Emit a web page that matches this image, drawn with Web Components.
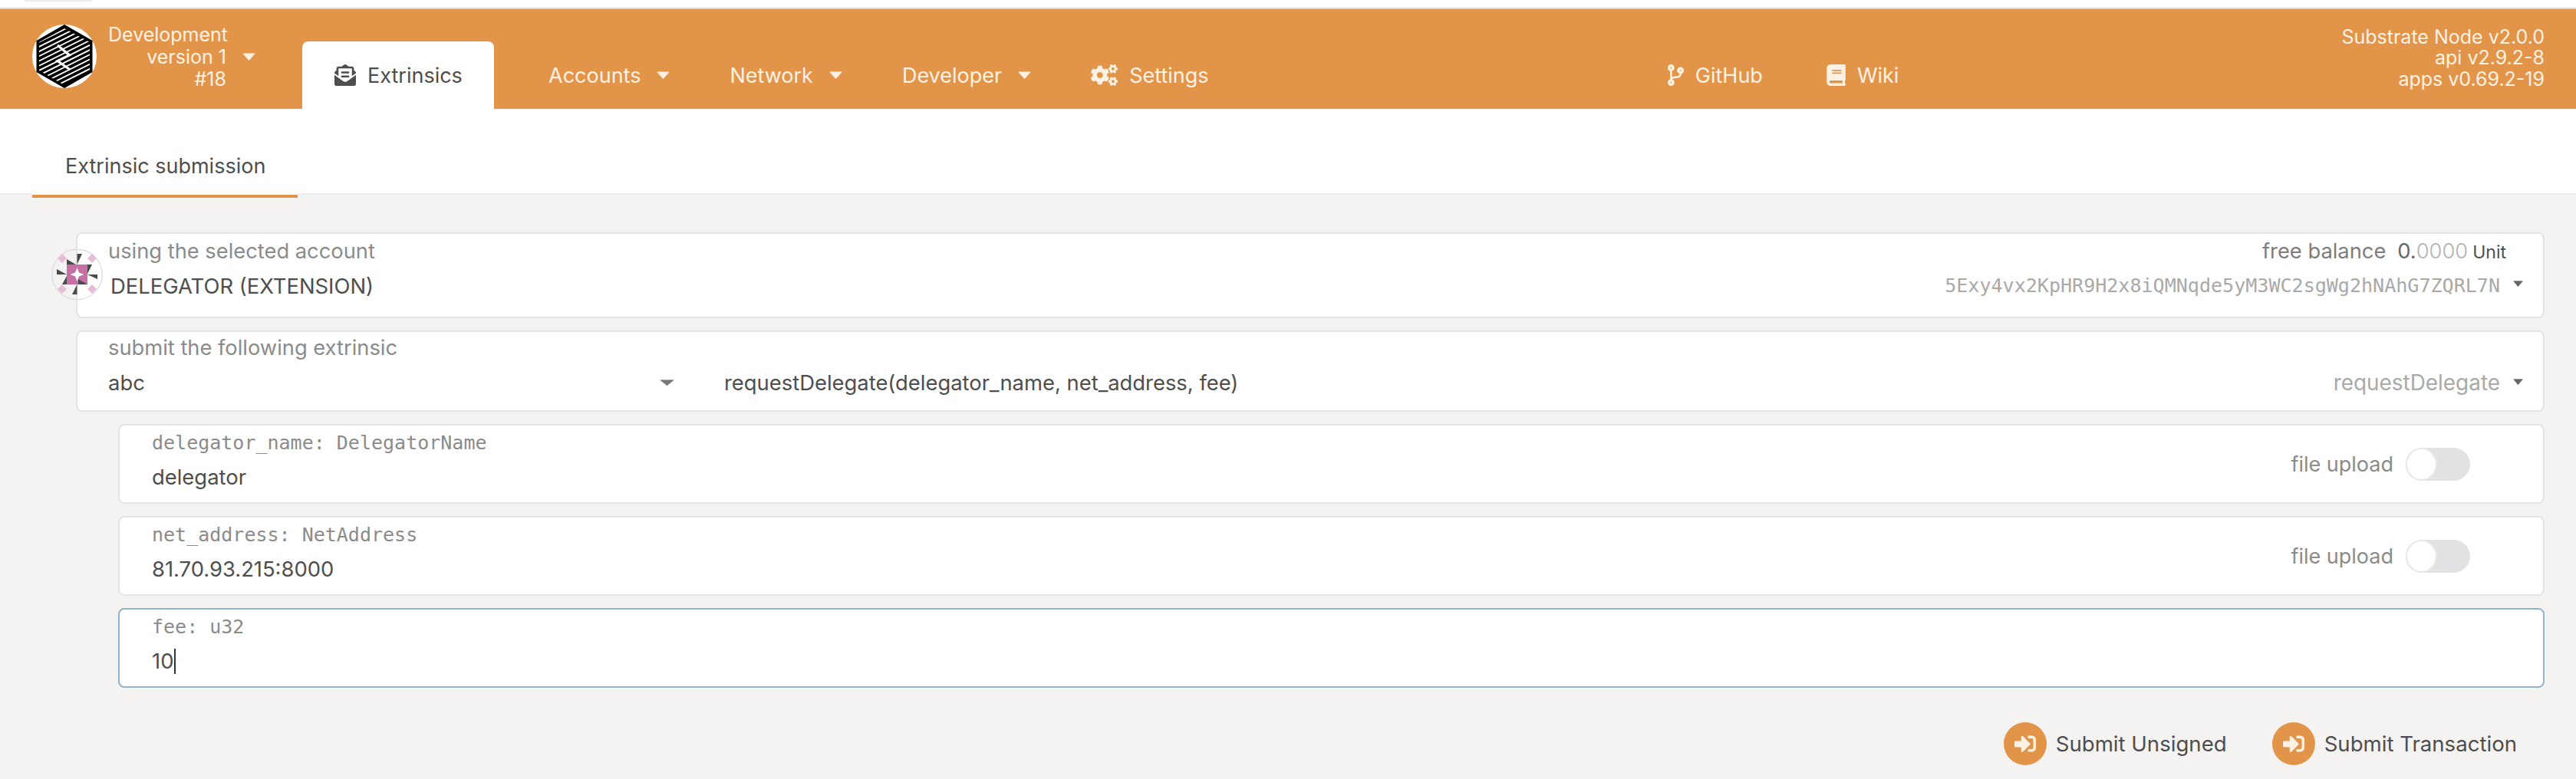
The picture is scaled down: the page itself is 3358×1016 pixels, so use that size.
<!DOCTYPE html>
<html>
<head>
<meta charset="utf-8">
<title>Extrinsics</title>
<style>
  html, body { margin: 0; height: 100%; background: #f4f3f1; }
  body { font-family: Inter, "Liberation Sans", sans-serif; color: #4e4e4e; }
  .mono { font-family: "DejaVu Sans Mono", "Liberation Mono", monospace; font-size: 25px; }
</style>
</head>
<body>
<app-header>
  <nav-brand></nav-brand>
  <nav-tab active icon="extrinsics">Extrinsics</nav-tab>
  <nav-tab caret>Accounts</nav-tab>
  <nav-tab caret>Network</nav-tab>
  <nav-tab caret>Developer</nav-tab>
  <nav-tab icon="settings">Settings</nav-tab>
  <nav-tab slot="links" icon="github">GitHub</nav-tab>
  <nav-tab slot="links" icon="wiki" style="margin-left:5px">Wiki</nav-tab>
  <span slot="versions">Substrate Node v2.0.0</span>
  <span slot="versions">api v2.9.2-8</span>
  <span slot="versions">apps v0.69.2-19</span>
</app-header>

<sub-tabs>Extrinsic submission</sub-tabs>

<main-form>
  <form-card kind="account">
    <account-icon slot="overlay"></account-icon>
    <span slot="label">using the selected account</span>
    <balance-info slot="label-end"></balance-info>
    <span style="margin-left:3px">DELEGATOR (EXTENSION)</span>
    <select-end slot="value-end" mono>5Exy4vx2KpHR9H2x8iQMNqde5yM3WC2sgWg2hNAhG7ZQRL7N</select-end>
  </form-card>

  <form-card kind="call">
    <span slot="label">submit the following extrinsic</span>
    <module-pick>abc</module-pick>
    <span>requestDelegate(delegator_name, net_address, fee)</span>
    <select-end slot="value-end">requestDelegate</select-end>
  </form-card>

  <form-card kind="arg">
    <span slot="label" class="mono">delegator_name: DelegatorName</span>
    <span>delegator</span>
    <file-toggle slot="side"></file-toggle>
  </form-card>

  <form-card kind="arg">
    <span slot="label" class="mono">net_address: NetAddress</span>
    <span>81.70.93.215:8000</span>
    <file-toggle slot="side"></file-toggle>
  </form-card>

  <form-card kind="arg" focused>
    <span slot="label" class="mono">fee: u32</span>
    <text-cursor>10</text-cursor>
  </form-card>

  <submit-row>
    <submit-button>Submit Unsigned</submit-button>
    <submit-button>Submit Transaction</submit-button>
  </submit-row>
</main-form>

<script>
const ICONS = {
  extrinsics: ["0 0 512 512", "M176 216h160c8.84 0 16-7.16 16-16v-16c0-8.84-7.16-16-16-16H176c-8.84 0-16 7.16-16 16v16c0 8.84 7.16 16 16 16zm-16 80c0 8.84 7.16 16 16 16h160c8.84 0 16-7.16 16-16v-16c0-8.84-7.16-16-16-16H176c-8.84 0-16 7.16-16 16v16zm96 121.13c-16.42 0-32.84-5.06-46.86-15.19L0 250.86V464c0 26.51 21.49 48 48 48h416c26.51 0 48-21.49 48-48V250.86L302.86 401.94c-14.02 10.12-30.44 15.19-46.86 15.19zm237.61-254.18c-8.85-6.94-17.24-13.47-29.61-22.81V96c0-26.51-21.49-48-48-48h-77.55c-3.04-2.2-5.87-4.26-9.04-6.56C312.6 29.17 279.2-.35 256 0c-23.2-.35-56.59 29.17-73.41 41.44-3.17 2.3-6 4.36-9.04 6.56H96c-26.51 0-48 21.49-48 48v44.14c-12.37 9.33-20.76 15.87-29.61 22.81A47.995 47.995 0 0 0 0 200.72v10.65l96 69.35V96h320v184.72l96-69.35v-10.65c0-14.74-6.78-28.67-18.39-37.77z", 28, 28],
  settings: ["0 0 640 512", "M512.1 191l-8.2 14.3c-3 5.3-9.4 7.5-15.1 5.4-11.8-4.4-22.6-10.7-32.1-18.6-4.6-3.8-5.8-10.5-2.8-15.7l8.2-14.3c-6.9-8-12.3-17.3-15.9-27.4h-16.5c-6 0-11.2-4.3-12.2-10.3-2-12-2.1-24.6 0-37.1 1-6 6.2-10.4 12.2-10.4h16.5c3.6-10.1 9-19.4 15.9-27.4l-8.2-14.3c-3-5.2-1.9-11.9 2.8-15.7 9.5-7.9 20.4-14.2 32.1-18.6 5.7-2.1 12.1.1 15.1 5.4l8.2 14.3c10.5-1.9 21.2-1.9 31.7 0L552 6.3c3-5.3 9.4-7.5 15.1-5.4 11.8 4.4 22.6 10.7 32.1 18.6 4.6 3.8 5.8 10.5 2.8 15.7l-8.2 14.3c6.9 8 12.3 17.3 15.9 27.4h16.5c6 0 11.2 4.3 12.2 10.3 2 12 2.1 24.6 0 37.1-1 6-6.2 10.4-12.2 10.4h-16.5c-3.6 10.1-9 19.4-15.9 27.4l8.2 14.3c3 5.2 1.9 11.9-2.8 15.7-9.5 7.9-20.4 14.2-32.1 18.6-5.7 2.1-12.1-.1-15.1-5.4l-8.2-14.3c-10.4 1.9-21.2 1.9-31.7 0zm-10.5-58.8c38.5 29.6 82.4-14.3 52.8-52.8-38.5-29.7-82.4 14.3-52.8 52.8zM386.3 286.1l33.7 16.8c10.1 5.8 14.5 18.1 10.5 29.1-8.9 24.2-26.4 46.4-42.6 65.8-7.4 8.9-20.2 11.1-30.3 5.3l-29.1-16.8c-16 13.7-34.6 24.6-54.9 31.7v33.6c0 11.6-8.3 21.6-19.7 23.6-24.6 4.2-50.4 4.4-75.9 0-11.5-2-20-11.9-20-23.6V418c-20.3-7.2-38.9-18-54.9-31.7L74 403c-10 5.8-22.9 3.6-30.3-5.3-16.2-19.4-33.3-41.6-42.2-65.7-4-10.9.4-23.2 10.5-29.1l33.3-16.8c-3.9-20.9-3.9-42.4 0-63.4L12 205.8c-10.1-5.8-14.6-18.1-10.5-29 8.9-24.2 26-46.4 42.2-65.8 7.4-8.9 20.2-11.1 30.3-5.3l29.1 16.8c16-13.7 34.6-24.6 54.9-31.7V57.1c0-11.5 8.2-21.5 19.6-23.5 24.6-4.2 50.5-4.4 76-.1 11.5 2 20 11.9 20 23.6v33.6c20.3 7.2 38.9 18 54.9 31.7l29.1-16.8c10-5.8 22.9-3.6 30.3 5.3 16.2 19.4 33.2 41.6 42.1 65.8 4 10.9.1 23.2-10 29.1l-33.7 16.8c3.9 21 3.9 42.5 0 63.5zm-117.6 21.1c59.2-77-28.7-164.9-105.7-105.7-59.2 77 28.7 164.9 105.7 105.7zm243.4 182.7l-8.2 14.3c-3 5.3-9.4 7.5-15.1 5.4-11.8-4.4-22.6-10.7-32.1-18.6-4.6-3.8-5.8-10.5-2.8-15.7l8.2-14.3c-6.9-8-12.3-17.3-15.9-27.4h-16.5c-6 0-11.2-4.3-12.2-10.3-2-12-2.1-24.6 0-37.1 1-6 6.2-10.4 12.2-10.4h16.5c3.6-10.1 9-19.4 15.9-27.4l-8.2-14.3c-3-5.2-1.9-11.9 2.8-15.7 9.5-7.9 20.4-14.2 32.1-18.6 5.7-2.1 12.1.1 15.1 5.4l8.2 14.3c10.5-1.9 21.2-1.9 31.7 0l8.2-14.3c3-5.3 9.4-7.5 15.1-5.4 11.8 4.4 22.6 10.7 32.1 18.6 4.6 3.8 5.8 10.5 2.8 15.7l-8.2 14.3c6.9 8 12.3 17.3 15.9 27.4h16.5c6 0 11.2 4.3 12.2 10.3 2 12 2.1 24.6 0 37.1-1 6-6.2 10.4-12.2 10.4h-16.5c-3.6 10.1-9 19.4-15.9 27.4l8.2 14.3c3 5.2 1.9 11.9-2.8 15.7-9.5 7.9-20.4 14.2-32.1 18.6-5.7 2.1-12.1-.1-15.1-5.4l-8.2-14.3c-10.4 1.9-21.2 1.9-31.7 0zM501.6 431c38.5 29.6 82.4-14.3 52.8-52.8-38.5-29.6-82.4 14.3-52.8 52.8z", 35, 28],
  github: ["0 0 384 512", "M384 144c0-44.2-35.8-80-80-80s-80 35.8-80 80c0 36.4 24.3 67.1 57.5 76.8-.6 16.1-4.2 28.5-11 36.9-15.4 19.2-49.3 22.4-85.2 25.7-28.2 2.6-57.4 5.4-81.3 16.9v-144c32.5-10.2 56-40.5 56-76.3 0-44.2-35.8-80-80-80S0 35.8 0 80c0 35.8 23.5 66.1 56 76.3v199.3C23.5 365.9 0 396.2 0 432c0 44.2 35.8 80 80 80s80-35.8 80-80c0-34-21.2-63.1-51.2-74.6 3.1-5.2 7.8-9.8 14.9-13.4 16.2-8.2 40.4-10.4 66.1-12.8 42.2-3.9 90-8.4 118.2-43.4 14-17.4 21.1-39.8 21.6-67.9 31.6-10.8 54.4-40.7 54.4-75.9zM80 64c8.8 0 16 7.2 16 16s-7.2 16-16 16-16-7.2-16-16 7.2-16 16-16zm0 384c-8.8 0-16-7.2-16-16s7.2-16 16-16 16 7.2 16 16-7.2 16-16 16zm224-320c8.8 0 16 7.2 16 16s-7.2 16-16 16-16-7.2-16-16 7.2-16 16-16z", 21, 28],
  wiki: ["0 0 448 512", "M448 360V24c0-13.3-10.7-24-24-24H96C43 0 0 43 0 96v320c0 53 43 96 96 96h328c13.3 0 24-10.7 24-24v-16c0-7.5-3.5-14.3-8.9-18.7-4.2-15.4-4.2-59.3 0-74.7 5.4-4.3 8.9-11.1 8.9-18.6zM128 134c0-3.3 2.7-6 6-6h212c3.3 0 6 2.7 6 6v20c0 3.3-2.7 6-6 6H134c-3.3 0-6-2.7-6-6v-20zm0 64c0-3.3 2.7-6 6-6h212c3.3 0 6 2.7 6 6v20c0 3.3-2.7 6-6 6H134c-3.3 0-6-2.7-6-6v-20zm253.4 250H96c-17.7 0-32-14.3-32-32 0-17.6 14.4-32 32-32h285.4c-1.9 17.1-1.9 46.9 0 64z", 25, 28],
  submit: ["0 0 512 512", "M416 448h-84c-6.6 0-12-5.4-12-12v-40c0-6.6 5.4-12 12-12h84c17.7 0 32-14.3 32-32V160c0-17.7-14.3-32-32-32h-84c-6.6 0-12-5.4-12-12V76c0-6.6 5.4-12 12-12h84c53 0 96 43 96 96v192c0 53-43 96-96 96zm-47-201L201 79c-15-15-41-4.5-41 17v96H24c-13.3 0-24 10.7-24 24v96c0 13.3 10.7 24 24 24h136v96c0 21.5 26 32 41 17l168-168c9.3-9.4 9.3-24.6 0-34z", 28, 28],
};

function iconSvg(name) {
  const [box, d, w, h] = ICONS[name];
  return `<svg viewBox="${box}" width="${w}" height="${h}" fill="currentColor" style="flex:none;display:block"><path d="${d}"/></svg>`;
}

function caretSvg(w, h, color) {
  return `<svg viewBox="0 0 18 10" width="${w}" height="${h}" preserveAspectRatio="none" style="flex:none;display:block"><path d="M1 1h16L9 9.5z" fill="${color}" stroke="${color}" stroke-width="1" stroke-linejoin="round"/></svg>`;
}

class AppHeader extends HTMLElement {
  constructor() {
    super();
    this.attachShadow({ mode: "open" });
    this.shadowRoot.innerHTML = `
      <style>
        :host { display: block; background: #fff; }
        .pill { width: 88px; height: 2px; margin-left: 32px; background: #ececec; border-radius: 0 0 8px 8px; }
        .bar {
          display: flex; align-items: flex-end; height: 130px; margin-top: 8px;
          border-top: 2px solid #d9d9d9; background: #e29548; color: #fdf1e4;
          padding-left: 42px; padding-right: 41px;
        }
        .links { display: flex; margin-left: auto; }
        .versions {
          display: flex; flex-direction: column; align-items: flex-end; align-self: center;
          margin-left: 538px; font-size: 25px; line-height: 27.5px; margin-top: -2px;
        }
      </style>
      <div class="pill"></div>
      <div class="bar">
        <slot></slot>
        <div class="links"><slot name="links"></slot></div>
        <div class="versions"><slot name="versions"></slot></div>
      </div>`;
  }
}

class NavBrand extends HTMLElement {
  constructor() {
    super();
    this.attachShadow({ mode: "open" });
    let lines = "";
    for (let y = -10; y < 130; y += 6.2) {
      lines += `<line x1="0" y1="${y}" x2="84" y2="${y - 42}"/>`;
    }
    this.shadowRoot.innerHTML = `
      <style>
        :host { display: flex; align-items: center; align-self: center; flex: none; margin-top: -6px; width: 352px; color: #fdf1e4; }
        svg.logo { display: block; flex: none; }
        .text { margin-left: 15px; width: 154px; text-align: right; font-size: 25px; line-height: 29px; white-space: nowrap; }
        .caret { margin-left: 21px; }
      </style>
      <svg class="logo" width="84" height="84" viewBox="0 0 84 84">
        <defs>
          <clipPath id="hexin"><polygon points="42,5 75,23 75,60 42,79 9,60 9,23"/></clipPath>
        </defs>
        <ellipse cx="42" cy="41.5" rx="42" ry="41.5" fill="#fff"/>
        <polygon points="42,0 78.5,21 78.5,62 42,83 5.5,62 5.5,21" fill="#000"/>
        <g clip-path="url(#hexin)" stroke="#fff" stroke-width="1.9">${lines}</g>
        <polyline points="33,27 48.5,40 33,47.5 49.5,59" fill="none" stroke="#fff" stroke-width="3.2"/>
      </svg>
      <div class="text">Development<br>version 1<br>#18</div>
      <div class="caret">${caretSvg(17, 10, "#fdf1e4")}</div>`;
  }
}

class NavTab extends HTMLElement {
  constructor() {
    super();
    this.attachShadow({ mode: "open" });
    const icon = this.getAttribute("icon");
    this.shadowRoot.innerHTML = `
      <style>
        :host {
          display: flex; align-items: center; flex: none; height: 88px; box-sizing: border-box;
          padding: 0 39px; font-size: 27px; white-space: nowrap;
        }
        :host([active]) {
          background: #fff; color: #4e4e4e; border-radius: 8px 8px 0 0;
          width: 250px; padding: 0 0 0 42px; margin-right: 32px;
        }
        .ic { margin-right: 15px; }
        .car { margin-left: 21px; }
      </style>
      ${icon ? `<span class="ic">${iconSvg(icon)}</span>` : ""}
      <slot></slot>
      ${this.hasAttribute("caret") ? `<span class="car">${caretSvg(17, 10, "#fdf1e4")}</span>` : ""}`;
  }
}

class SubTabs extends HTMLElement {
  constructor() {
    super();
    this.attachShadow({ mode: "open" });
    this.shadowRoot.innerHTML = `
      <style>
        :host { display: block; height: 112px; box-sizing: border-box; background: #fff; border-bottom: 2px solid #ededed; padding-left: 42px; }
        .tab {
          width: 346px; height: 116px; box-sizing: border-box; padding: 60px 0 0 43px;
          background: #fff; border-bottom: 4px solid #e29548; font-size: 27px; line-height: 30px; color: #4e4e4e;
        }
      </style>
      <div class="tab"><slot></slot></div>`;
  }
}

class MainForm extends HTMLElement {
  constructor() {
    super();
    this.attachShadow({ mode: "open" });
    this.shadowRoot.innerHTML = `
      <style>
        :host { display: flex; flex-direction: column; gap: 16px; padding: 49px 41px 0 99px; }
      </style>
      <slot></slot>`;
  }
}

class FormCard extends HTMLElement {
  constructor() {
    super();
    this.attachShadow({ mode: "open" });
    this.shadowRoot.innerHTML = `
      <style>
        :host {
          display: flex; position: relative; box-sizing: border-box; background: #fff;
          border: 2px solid #e4e4e4; border-radius: 8px; height: 104px; margin-left: 55px;
          padding: 7px 0 0 42px;
        }
        :host([kind="account"]) { height: 112px; margin-left: 0; padding: 8px 0 0 40px; }
        :host([kind="call"]) { height: 106px; margin-left: 0; padding: 6px 0 0 40px; }
        :host([focused]) { border-color: #8fb3d1; }
        .body { flex: 1; min-width: 0; display: flex; flex-direction: column; gap: 15px; }
        .row { display: flex; justify-content: space-between; align-items: center; height: 30px; line-height: 30px; white-space: nowrap; }
        .label { color: #8b8b8b; font-size: 27.3px; padding-right: 48px; }
        .value { color: #4e4e4e; font-size: 27.4px; padding-right: 26px; }
        .start { display: flex; align-items: center; }
        .side { display: flex; align-items: center; align-self: center; margin-top: -7px; }
      </style>
      <slot name="overlay"></slot>
      <div class="body">
        <div class="row label"><span><slot name="label"></slot></span><slot name="label-end"></slot></div>
        <div class="row value"><span class="start"><slot></slot></span><slot name="value-end"></slot></div>
      </div>
      <div class="side"><slot name="side"></slot></div>`;
  }
}

class AccountIcon extends HTMLElement {
  constructor() {
    super();
    this.attachShadow({ mode: "open" });
    this.shadowRoot.innerHTML = `
      <style>
        :host { display: block; position: absolute; left: -34px; top: 19px; width: 67px; height: 68px; }
        svg { display: block; }
      </style>
      <svg viewBox="0 0 67 68" width="67" height="68">
        <circle cx="33.5" cy="34" r="32.7" fill="none" stroke="#dedede" stroke-width="1.4"/>
        <g fill="#e6bdd6">
          <polygon points="14,7 20,13 14,19 8,13"/>
          <polygon points="53,7 59,13 53,19 47,13"/>
          <polygon points="14,47 20,53 14,59 8,53"/>
          <polygon points="53,47 59,53 53,59 47,53"/>
        </g>
        <rect x="20" y="21" width="27" height="26" fill="#c56fa5"/>
        <polygon points="33.5,25 36,31.5 42.5,34 36,36.5 33.5,43 31,36.5 24.5,34 31,31.5" fill="#fff"/>
        <g fill="#4a4a4a">
          <polygon points="33.5,7 40,7 33.5,21"/>
          <polygon points="20,14 32,21 20,21"/>
          <polygon points="47,21 53,21 47,33"/>
          <polygon points="47,34 60,34 60,40"/>
          <polygon points="47,47 35,47 35,40"/>
          <polygon points="27,60 33.5,60 33.5,47"/>
          <polygon points="20,36 20,47 14,47"/>
          <polygon points="7,27 20,34 7,34"/>
        </g>
      </svg>`;
  }
}

class BalanceInfo extends HTMLElement {
  constructor() {
    super();
    this.attachShadow({ mode: "open" });
    this.shadowRoot.innerHTML = `
      <style>
        :host { display: flex; align-items: baseline; color: #7d7d7d; font-size: 27.3px; }
        .big { margin-left: 15px; color: #666; }
        .dim { color: #b3b3b3; font-weight: 300; }
        .unit { margin-left: 6px; color: #4e4e4e; font-size: 23px; }
      </style>
      <span>free balance</span><span class="big">0.<span class="dim">0000</span></span><span class="unit">Unit</span>`;
  }
}

class SelectEnd extends HTMLElement {
  constructor() {
    super();
    this.attachShadow({ mode: "open" });
    const mono = this.hasAttribute("mono");
    this.shadowRoot.innerHTML = `
      <style>
        :host { display: flex; align-items: center; color: #a9a9a9; font-size: 27.9px; }
        .t { ${mono ? 'font-family: "DejaVu Sans Mono", monospace; font-size: 25.05px;' : ""} }
        .c { margin-left: 17px; margin-top: ${mono ? -6 : -2}px; }
      </style>
      <span class="t"><slot></slot></span>
      <span class="c">${caretSvg(13, 8, "#666")}</span>`;
  }
}

class ModulePick extends HTMLElement {
  constructor() {
    super();
    this.attachShadow({ mode: "open" });
    this.shadowRoot.innerHTML = `
      <style>
        :host { display: flex; align-items: center; justify-content: space-between; width: 738px; margin-right: 65px; }
      </style>
      <span><slot></slot></span>
      ${caretSvg(19, 8, "#777")}`;
  }
}

class FileToggle extends HTMLElement {
  constructor() {
    super();
    this.attachShadow({ mode: "open" });
    this.shadowRoot.innerHTML = `
      <style>
        :host { display: flex; align-items: center; gap: 16px; margin-right: 95px; color: #8b8b8b; font-size: 27px; white-space: nowrap; }
        .track { width: 84px; height: 43px; border-radius: 22px; background: #e2e2e4; flex: none; }
        .knob { width: 41px; height: 43px; box-sizing: border-box; border-radius: 50%; background: #fff; border: 2px solid #e8e8e8; }
      </style>
      <span>file upload</span>
      <div class="track"><div class="knob"></div></div>`;
  }
}

class TextCursor extends HTMLElement {
  constructor() {
    super();
    this.attachShadow({ mode: "open" });
    this.shadowRoot.innerHTML = `
      <style>
        :host { display: inline-flex; align-items: center; }
        i { display: block; width: 2px; height: 33px; background: #333; margin-left: 1px; }
      </style>
      <slot></slot><i></i>`;
  }
}

class SubmitRow extends HTMLElement {
  constructor() {
    super();
    this.attachShadow({ mode: "open" });
    this.shadowRoot.innerHTML = `
      <style>
        :host { display: flex; justify-content: flex-end; gap: 59px; margin-top: 29px; padding-right: 36px; }
      </style>
      <slot></slot>`;
  }
}

class SubmitButton extends HTMLElement {
  constructor() {
    super();
    this.attachShadow({ mode: "open" });
    this.shadowRoot.innerHTML = `
      <style>
        :host { display: flex; align-items: center; gap: 12px; font-size: 27.6px; color: #4e4e4e; white-space: nowrap; }
        .c { width: 56px; height: 56px; border-radius: 50%; background: #e29548; color: #fdf1e4; display: flex; align-items: center; justify-content: center; flex: none; }
      </style>
      <span class="c">${iconSvg("submit")}</span>
      <span><slot></slot></span>`;
  }
}

customElements.define("app-header", AppHeader);
customElements.define("nav-brand", NavBrand);
customElements.define("nav-tab", NavTab);
customElements.define("sub-tabs", SubTabs);
customElements.define("main-form", MainForm);
customElements.define("form-card", FormCard);
customElements.define("account-icon", AccountIcon);
customElements.define("balance-info", BalanceInfo);
customElements.define("select-end", SelectEnd);
customElements.define("module-pick", ModulePick);
customElements.define("file-toggle", FileToggle);
customElements.define("text-cursor", TextCursor);
customElements.define("submit-row", SubmitRow);
customElements.define("submit-button", SubmitButton);
</script>
</body>
</html>
